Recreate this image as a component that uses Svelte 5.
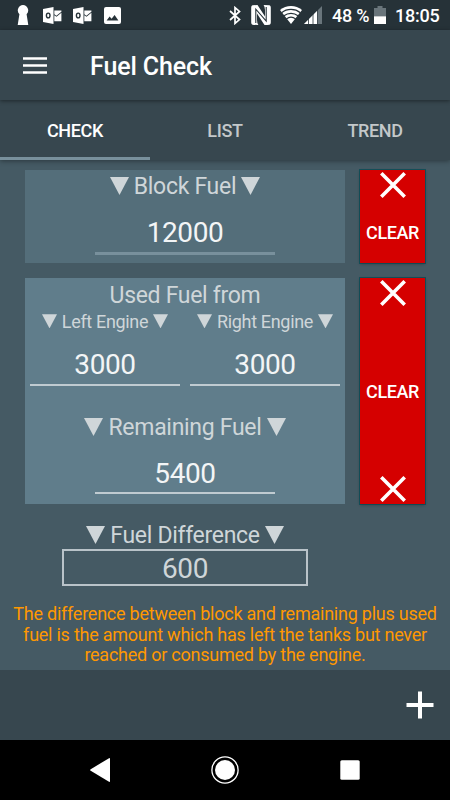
<script lang="ts">
  const tabs: string[] = ['CHECK', 'LIST', 'TREND'];

  let activeTab = 0;
  let blockFuel = '12000';
  let leftEngine = '3000';
  let rightEngine = '3000';
  let remainingFuel = '5400';

  $: difference =
    Number(blockFuel) - Number(remainingFuel) - Number(leftEngine) - Number(rightEngine);

  function clearBlock() {
    blockFuel = '';
  }

  function clearUsed() {
    leftEngine = '';
    rightEngine = '';
    remainingFuel = '';
  }
</script>

{#snippet triangle()}
  <svg class="triangle" viewBox="0 0 19 18"><path d="M0 0h19L9.5 18z" /></svg>
{/snippet}

{#snippet cross()}
  <svg class="cross" viewBox="0 0 26 26"><path d="M1.3 1.3l23.4 23.4M24.7 1.3L1.3 24.7" /></svg>
{/snippet}

{#snippet outlook()}
  <svg width="19" height="17" viewBox="0 0 19 17">
    <path fill="#fff" d="M0 2L10.5 0v17L0 15z" />
    <path fill="#fff" d="M11.3 3.4h7.1v1.3l-5 4-2.1-1.4z" />
    <path fill="#fff" d="M11.3 8.3l2.2 1.5 4.9-4v8.4h-7.1z" />
    <ellipse cx="5.2" cy="8.5" rx="1.8" ry="2.4" fill="none" stroke="#263238" stroke-width="1.4" />
  </svg>
{/snippet}

<div class="phone">
  <div class="status-bar">
    <div class="notifications">
      <svg width="12" height="20" viewBox="0 0 12 20">
        <path fill="#fff" d="M6 0a5.4 5.4 0 0 1 3.6 9.2L11.3 20H.7L2.4 9.2A5.4 5.4 0 0 1 6 0z" />
      </svg>
      {@render outlook()}
      {@render outlook()}
      <svg class="picture" width="17" height="17" viewBox="0 0 17 17">
        <rect width="17" height="17" rx="2" fill="#fff" />
        <path fill="#263238" d="M2.6 13.6l3-4 2 2.2 3-3.8 3.8 5.6z" />
      </svg>
    </div>
    <div class="system">
      <svg class="bluetooth" width="12" height="19" viewBox="0 0 12 19">
        <path fill="none" stroke="#fff" stroke-width="1.7" d="M1 5l9.5 8.6L6 17.4V1.6l4.5 3.8L1 14" />
      </svg>
      <svg class="nfc" width="20" height="20" viewBox="0 0 20 20">
        <path fill="#fff" d="M1.5.3Q3.5 0 6.5 0L14 11.5V5Q14 2 12.6 0q4 0 5.9.3 1.3.4 1.3 2.2v15q0 1.8-1.3 2.2-2 .3-5 .3L6 8.5V15q0 3 1.4 5-4 0-5.9-.3Q.2 19.3.2 17.5v-15Q.2.7 1.5.3z" />
        <path fill="none" stroke="#263238" stroke-width="1.1" d="M4.8 18V4.2L15.2 16V2" />
      </svg>
      <svg class="wifi" width="22" height="18" viewBox="0 0 22 18">
        <path fill="#fff" d="M0 3.9a17.5 17.5 0 0 1 22 0L11 18z" />
        <path fill="none" stroke="#263238" stroke-width="1.2" d="M1.6 6.7a15 15 0 0 1 18.8 0M4 9.8a11 11 0 0 1 14 0M6.4 12.9a7.4 7.4 0 0 1 9.2 0" />
      </svg>
      <svg class="signal" width="18" height="18" viewBox="0 0 18 18">
        <path fill="#69757b" d="M18 0v18H0z" />
        <path fill="#fff" d="M13.5 4.5V18H0z" />
        <path stroke="#263238" stroke-width=".8" d="M4.5 12v6M9 8v10M13.5 4v14" />
      </svg>
      <span class="percent">48 %</span>
      <svg class="battery" width="12" height="18" viewBox="0 0 12 18">
        <path fill="#69757b" d="M3.5 0h5v2H12v8.5H0V2h3.5z" />
        <path fill="#fff" d="M0 10.3h12V18H0z" />
      </svg>
      <span class="time">18:05</span>
    </div>
  </div>

  <header class="app-bar">
    <button class="icon-button" aria-label="Menu">
      <svg width="24" height="17" viewBox="0 0 24 17">
        <path stroke="#fff" stroke-width="2.5" d="M0 1.5h24M0 8.5h24M0 15.5h24" />
      </svg>
    </button>
    <h1>Fuel Check</h1>
  </header>

  <nav class="tabs">
    {#each tabs as tab, i}
      <button class="tab {activeTab === i ? 'active' : ''}" on:click={() => (activeTab = i)}>
        {tab}
      </button>
    {/each}
  </nav>

  <main>
    <section class="row block-row">
      <div class="panel block">
        <h2>{@render triangle()}<span>Block Fuel</span>{@render triangle()}</h2>
        <input class="thick" aria-label="Block Fuel" bind:value={blockFuel} />
      </div>
      <button class="clear" on:click={clearBlock}>
        {@render cross()}
        <span>CLEAR</span>
      </button>
    </section>

    <section class="row used-row">
      <div class="panel used">
        <h2><span>Used Fuel from</span></h2>
        <div class="engines">
          <label>
            <span class="small">{@render triangle()}<span>Left Engine</span>{@render triangle()}</span>
            <input bind:value={leftEngine} />
          </label>
          <label>
            <span class="small">{@render triangle()}<span>Right Engine</span>{@render triangle()}</span>
            <input bind:value={rightEngine} />
          </label>
        </div>
        <h2 class="remaining">{@render triangle()}<span>Remaining Fuel</span>{@render triangle()}</h2>
        <input aria-label="Remaining Fuel" bind:value={remainingFuel} />
      </div>
      <button class="clear tall" on:click={clearUsed}>
        {@render cross()}
        <span>CLEAR</span>
        {@render cross()}
      </button>
    </section>

    <section class="difference">
      <h2>{@render triangle()}<span>Fuel Difference</span>{@render triangle()}</h2>
      <output>{difference}</output>
    </section>

    <p class="hint">
      The difference between block and remaining plus used fuel is the amount which has left the
      tanks but never reached or consumed by the engine.
    </p>
  </main>

  <footer>
    <button class="icon-button" aria-label="Add">
      <svg width="28" height="28" viewBox="0 0 28 28">
        <path stroke="#fff" stroke-width="4" d="M14 .5v27M.5 14h27" />
      </svg>
    </button>
  </footer>

  <div class="nav-bar">
    <svg width="20" height="24" viewBox="0 0 20 24">
      <path fill="#fff" d="M.7 11.2L19 .2q1-.4 1 .6v22.4q0 1-1 .6L.7 12.8q-1.2-.8 0-1.6z" />
    </svg>
    <svg width="28" height="28" viewBox="0 0 28 28">
      <circle cx="14" cy="14" r="10" fill="#fff" />
      <circle cx="14" cy="14" r="13.1" fill="none" stroke="#fff" stroke-width="1.3" />
    </svg>
    <svg width="20" height="20" viewBox="0 0 20 20">
      <rect x=".3" y=".3" width="19.4" height="19.4" rx="1.5" fill="#fff" />
    </svg>
  </div>
</div>

<style>
  :global(body) {
    background: #000;
  }

  .phone {
    width: 450px;
    height: 800px;
    display: flex;
    flex-direction: column;
    overflow: hidden;
    font-family: Roboto, sans-serif;
    color: #fff;
    background: #455a64;
  }

  .phone :global(*) {
    box-sizing: border-box;
  }

  svg {
    display: block;
    flex: none;
  }

  button {
    appearance: none;
    border: 0;
    margin: 0;
    padding: 0;
    background: none;
    color: inherit;
    font-family: inherit;
    cursor: pointer;
  }

  .status-bar {
    flex: none;
    height: 30px;
    display: flex;
    justify-content: space-between;
    align-items: center;
    padding: 0 10px 0 17px;
    background: #263238;
  }

  .notifications,
  .system {
    display: flex;
    align-items: center;
  }

  .notifications {
    gap: 11px;
  }

  .notifications svg:first-child {
    margin-right: 3px;
  }

  .picture {
    margin-left: 1px;
  }

  .system {
    font-size: 18px;
    font-weight: 500;
    line-height: 30px;
    letter-spacing: -0.25px;
  }

  .nfc {
    margin-left: 10px;
  }

  .wifi {
    margin-left: 9px;
  }

  .signal {
    margin-left: 2px;
  }

  .percent,
  .time {
    padding-top: 1px;
    white-space: nowrap;
  }

  .percent {
    margin-left: 10px;
    width: 38px;
  }

  .battery {
    margin-left: 4px;
  }

  .time {
    width: 45px;
    margin-left: 9px;
  }

  .app-bar {
    flex: none;
    height: 70px;
    display: flex;
    align-items: center;
    padding-left: 23px;
    background: #37474f;
    box-shadow: 0 1px 4px rgba(0, 0, 0, 0.45);
    z-index: 2;
  }

  h1 {
    margin: 3px 0 0 43px;
    font-size: 25px;
    font-weight: 500;
    line-height: 30px;
    letter-spacing: -0.12px;
  }

  .tabs {
    flex: none;
    height: 60px;
    display: flex;
    background: #37474f;
    box-shadow: 0 1px 5px rgba(0, 0, 0, 0.4);
    z-index: 1;
  }

  .tab {
    flex: 1;
    padding-top: 4px;
    border-bottom: 3px solid transparent;
    font-size: 18px;
    font-weight: 500;
    letter-spacing: -0.35px;
    color: #c3c8ca;
  }

  .tab.active {
    color: #fff;
    border-bottom-color: #78909c;
  }

  main {
    flex: 1;
    display: flex;
    flex-direction: column;
    padding-top: 10px;
  }

  .row {
    display: flex;
    gap: 15px;
    padding: 0 25px;
  }

  .block-row {
    height: 93px;
  }

  .used-row {
    height: 226px;
    margin-top: 15px;
  }

  .panel {
    width: 320px;
    display: flex;
    flex-direction: column;
    align-items: center;
  }

  .block {
    padding-top: 3px;
    background: #546e7a;
  }

  .used {
    padding-top: 4px;
    background: #607d8b;
  }

  h2,
  .small {
    display: flex;
    align-items: center;
    justify-content: center;
    gap: 5.2px;
    margin: 0;
    font-size: 23px;
    font-weight: 400;
    line-height: 26px;
    letter-spacing: -0.3px;
    color: #cfd6d9;
  }

  h2 {
    height: 26px;
  }

  h2 span {
    padding-top: 2px;
  }

  .small {
    gap: 4.5px;
    font-size: 18px;
    line-height: 22px;
    letter-spacing: -0.33px;
    white-space: nowrap;
  }

  .small span {
    padding-top: 1px;
    margin-bottom: -1px;
  }

  .triangle {
    width: 19px;
    height: 18px;
    fill: #cfd6d9;
  }

  .small .triangle {
    width: 15px;
    height: 14.5px;
  }

  input {
    width: 180px;
    height: 37px;
    margin-top: 17px;
    padding: 0 0 3px;
    border: 0;
    border-bottom: 2px solid #c0cbd1;
    border-radius: 0;
    outline: none;
    background: none;
    color: #f3f5f6;
    font-family: inherit;
    font-size: 28px;
    line-height: 32px;
    letter-spacing: -0.4px;
    text-align: center;
  }

  input.thick {
    height: 39px;
    border-bottom: 3px solid #78909c;
  }

  .engines {
    display: flex;
    gap: 10px;
    margin-top: 2px;
  }

  .engines label {
    width: 150px;
  }

  .engines input {
    display: block;
    width: 150px;
    padding-bottom: 4px;
  }

  .remaining {
    margin-top: 28px;
  }

  .clear {
    width: 65px;
    display: flex;
    flex-direction: column;
    align-items: center;
    padding-top: 2px;
    background: #d50000;
    box-shadow: 0 0 0 1px rgba(0, 75, 85, 0.7), 0 1px 3px rgba(0, 0, 0, 0.3);
    font-size: 18px;
    font-weight: 500;
    line-height: 20px;
    letter-spacing: -0.4px;
  }

  .clear span {
    margin-top: 25px;
  }

  .tall {
    justify-content: space-between;
    padding-bottom: 2px;
  }

  .tall span {
    margin-top: 1px;
  }

  .cross {
    width: 26px;
    height: 26px;
    fill: none;
    stroke: #fff;
    stroke-width: 3.6;
  }

  .difference {
    width: 320px;
    margin: 18px 0 0 25px;
    display: flex;
    flex-direction: column;
    align-items: center;
  }

  output {
    width: 246px;
    height: 37px;
    margin-top: 1px;
    border: 2px solid #b9c3c9;
    color: #cfd6d9;
    font-size: 28px;
    line-height: 36px;
    letter-spacing: -0.4px;
    text-align: center;
  }

  .hint {
    margin: 18px 8px 0;
    font-size: 18px;
    line-height: 20.5px;
    letter-spacing: -0.24px;
    text-align: center;
    color: #ff9800;
  }

  footer {
    flex: none;
    height: 70px;
    display: flex;
    align-items: center;
    justify-content: flex-end;
    padding-right: 16px;
    background: #37474f;
  }

  .nav-bar {
    flex: none;
    height: 60px;
    display: flex;
    align-items: center;
    justify-content: space-between;
    padding: 0 90px;
    background: #000;
  }
</style>
